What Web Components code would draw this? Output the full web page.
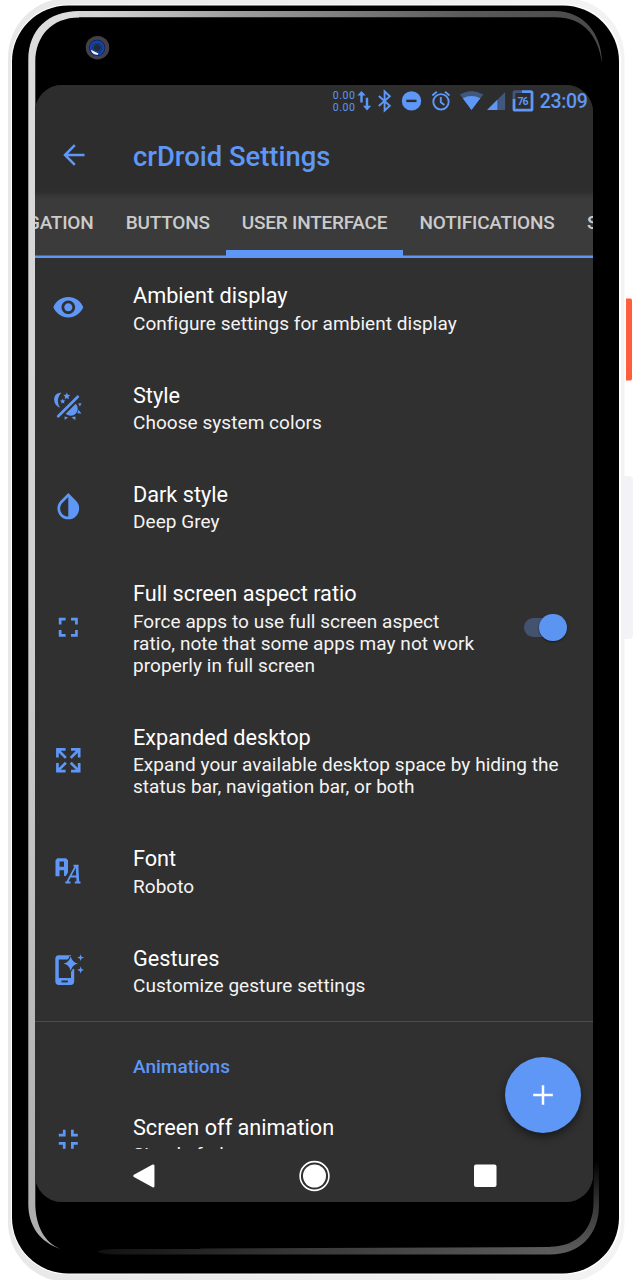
<!DOCTYPE html>
<html lang="en">
<head>
<meta charset="utf-8">
<title>crDroid Settings</title>
<style>
html,body{margin:0;background:#fff;height:1280px;overflow:hidden}
body{font-family:Roboto,"Liberation Sans",sans-serif}
</style>
</head>
<body>
<phone-frame>
  <phone-screen>
    <status-bar></status-bar>
    <app-bar>crDroid Settings</app-bar>
    <tab-strip>
      <tab-item style="--w:74.5px;--j:flex-end">GATION</tab-item>
      <tab-item style="--w:116.500px">BUTTONS</tab-item>
      <tab-item style="--w:177px" selected>USER INTERFACE</tab-item>
      <tab-item style="--w:168px">NOTIFICATIONS</tab-item>
      <tab-item style="--w:22.5px;--j:flex-start">S</tab-item>
    </tab-strip>
    <settings-list>
      <setting-row icon="eye"><span slot="title">Ambient display</span>Configure settings for ambient display</setting-row>
      <setting-row icon="style"><span slot="title">Style</span>Choose system colors</setting-row>
      <setting-row icon="drop"><span slot="title">Dark style</span>Deep Grey</setting-row>
      <setting-row icon="full"><span slot="title">Full screen aspect ratio</span>Force apps to use full screen aspect<br>ratio, note that some apps may not work<br>properly in full screen<toggle-switch slot="end"></toggle-switch></setting-row>
      <setting-row icon="expand"><span slot="title">Expanded desktop</span>Expand your available desktop space by hiding the<br>status bar, navigation bar, or both</setting-row>
      <setting-row icon="font"><span slot="title">Font</span>Roboto</setting-row>
      <setting-row icon="gesture"><span slot="title">Gestures</span>Customize gesture settings</setting-row>
      <list-heading>Animations</list-heading>
      <setting-row icon="exit"><span slot="title">Screen off animation</span>Simple fade</setting-row>
    </settings-list>
    <nav-bar></nav-bar>
    <add-button></add-button>
  </phone-screen>
</phone-frame>
<script>
const define = (name, html) => {
  const t = document.createElement('template');
  t.innerHTML = html;
  customElements.define(name, class extends HTMLElement {
    constructor() {
      super();
      this.attachShadow({mode: 'open'}).append(t.content.cloneNode(true));
    }
  });
};

define('phone-frame', `<style>
:host{display:grid;width:640px;height:1280px;overflow:hidden}
svg,.in{grid-area:1/1}
.in{padding:84.5px 0 0 35px;z-index:1}
svg{display:block}
</style>
<svg width="640" height="1280" viewBox="0 0 640 1280">
<defs>
<linearGradient id="o" x1="0" x2="1" y1="0" y2="0"><stop offset="0" stop-color="#e8e8e8"/><stop offset="1" stop-color="#f3f3f3"/></linearGradient>
<linearGradient id="t" gradientUnits="userSpaceOnUse" x1="28" x2="602" y1="0" y2="0"><stop offset="0" stop-color="#dcdcdc"/><stop offset=".12" stop-color="#d4d4d4"/><stop offset=".35" stop-color="#a0a0a0"/><stop offset=".75" stop-color="#5c5c5c"/><stop offset="1" stop-color="#484848"/></linearGradient>
<linearGradient id="l" x1="0" x2="0" y1="0" y2="1"><stop offset="0" stop-color="#dcdcdc"/><stop offset=".5" stop-color="#cfcfcf"/><stop offset="1" stop-color="#adadad"/></linearGradient>
<linearGradient id="b" gradientUnits="userSpaceOnUse" x1="97" x2="560" y1="0" y2="0"><stop offset="0" stop-color="#111"/><stop offset=".4" stop-color="#343434"/><stop offset="1" stop-color="#5e5e5e"/></linearGradient>
<linearGradient id="r" gradientUnits="userSpaceOnUse" x1="0" x2="0" y1="1160" y2="1254"><stop offset="0" stop-color="#000"/><stop offset=".5" stop-color="#383838"/><stop offset="1" stop-color="#5e5e5e"/></linearGradient>
</defs>
<path d="M624 476h4q5 0 5 4v155q0 4-5 4h-4z" fill="#f3f2f6"/>
<path d="M626 298.500h4.500q1.500 0 1.500 2v78q0 2-1.500 2H626z" fill="#ff5e3c"/>
<rect x="8" y="-2" width="616.500" height="1284" rx="60" fill="url(#o)"/>
<rect x="11" y="4.500" width="610" height="1270" rx="57" fill="#fff"/>
<rect x="12" y="5.500" width="607" height="1268" rx="56" fill="#000"/>
<path d="M28.300 60C28.300 30 48 11 79 11V17.500C52 17.500 35.300 36 35.300 62V1205C36 1226 44 1242 60.500 1249C40 1242 28.300 1226 28.300 1204Z" fill="url(#l)"/>
<path d="M78 11H555C583 11 602 33 602 63C598 34 582 17.300 555 17.300H78Z" fill="url(#t)"/>
<path d="M97 1251.500Q102 1249 115 1249H200L201 1248.500 550 1247V1254.500H115Q102 1254.500 97 1251.500Z" fill="url(#b)"/>
<path d="M594 1160H599V1205C599 1235 580 1254.500 550 1254.500V1246.700C578 1246.700 593.500 1228 593.500 1203Z" fill="url(#r)"/>
<circle cx="97.500" cy="47.700" r="11.800" fill="#443f49"/><circle cx="97.200" cy="47.800" r="8" fill="#10131d"/><circle cx="97.200" cy="47.800" r="6.200" fill="#16264f" stroke="#0c43b5" stroke-width="2.700"/><circle cx="97.200" cy="47.600" r="4" fill="#1c2947" stroke="#34405f"/><path d="M91.500 50L98.500 53.500 97.500 55Q92.500 54.500 91 50.500Z" fill="#e9f2ff"/>
</svg><div class="in"><slot></slot></div>`);

define('phone-screen', `<style>
:host{position:relative;display:flex;flex-direction:column;width:558.400px;height:1117.500px;border-radius:27px;overflow:hidden;background:#303030;color:#fff}
</style><slot></slot>`);

define('status-bar', `<style>
:host{display:flex;flex:none;height:32.500px;background:#2d2d2d;color:#5e97f6}
svg{display:block}text{font-family:Roboto,sans-serif;fill:#5e97f6}
</style>
<svg width="558" height="32.500" viewBox="35.200 85 558 32.500" fill="#5e97f6">
<text x="333" y="99" font-size="10.500" textLength="22">0.00</text><text x="333" y="111" font-size="10.500" textLength="22">0.00</text>
<path d="M361.700 91l4.200 4.600h-3v7h-2.400v-7h-3zM367.200 110.500l-4-4.700h2.800v-8h2.400v8h3z"/>
<path d="M379 96L390 105.800 384.800 110.500V91.500L390 96.200 379 106" fill="none" stroke="#5e97f6" stroke-width="1.900"/>
<circle cx="411.700" cy="100.900" r="9.700"/><rect x="406.500" y="99.700" width="10.200" height="2.400" fill="#2d2d2d"/>
<g fill="none" stroke="#5e97f6" stroke-width="1.900"><circle cx="441.200" cy="101.800" r="7.700"/><path d="M441 97v5.300l3.600 2.600M432.500 95.500l4.500-3.800M449.700 95.500l-4.500-3.800"/></g>
<path d="M460 94.500Q471.700 87.500 483.500 94.500L471.700 110Z" opacity=".4"/><path d="M463 98.300Q471.700 93.500 480.500 98.300L471.700 110Z"/>
<path d="M505.300 92V110H487.300Z" opacity=".4"/><path d="M497.500 99.700V110H487.300Z"/>
<g fill="none" stroke="#5e97f6" stroke-width="2.800"><path opacity=".4" d="M514.200 100V92.900q0-1.300 1.300-1.300H522"/><path d="M522 91.600h8.900q1.300 0 1.300 1.300v16q0 1.300-1.300 1.300h-15.400q-1.300 0-1.300-1.300V99"/></g>
<text x="517.800" y="104.800" font-size="10.500" font-weight="700" textLength="11">76</text>
<text x="540" y="108.300" font-size="19.500" font-weight="500" textLength="48">23:09</text>
</svg>`);

define('app-bar', `<style>
:host{display:flex;flex:none;align-items:center;height:76.500px;background:linear-gradient(#2d2d2d 94%,#303030);color:#5e97f6;font-size:27.400px;font-weight:500;line-height:32px;box-sizing:border-box;padding:0 0 0 26.500px}
svg{flex:none;margin-right:47.500px}
span{white-space:nowrap;padding-top:3px}
</style><svg width="24" height="24" viewBox="61.500 143 24 24" fill="none" stroke="#5e97f6" stroke-width="2.500"><path d="M84 155H64.500M74.300 145.200L64.500 155l9.800 9.800"/></svg><span><slot></slot></span>`);

define('tab-strip', `<style>
:host{display:flex;flex:none;height:64.500px;overflow:hidden;background:linear-gradient(#343434,#3b3b3b 5px);box-shadow:inset 0 -2.500px #5e97f6}
</style><slot></slot>`);
define('tab-item', `<style>
:host{display:flex;flex:none;box-sizing:border-box;width:var(--w);justify-content:var(--j,center);padding:17px 16px 0;font-size:19px;letter-spacing:-.22px;font-weight:500;line-height:23px;white-space:nowrap;color:#cbcbcb}
:host([selected]){border-bottom:8px solid #5e97f6}
</style><slot></slot>`);

define('settings-list', `<style>
:host{display:block;flex:none;height:891px;overflow:hidden}
</style><slot></slot>`);
define('list-heading', `<style>
:host{display:block;box-sizing:border-box;height:70px;padding-top:1px}
div{border-top:1.500px solid #4b4b4b;padding:34px 0 0 98px;color:#5e97f6;font-size:19px;font-weight:500;line-height:22px}
</style><div><slot></slot></div>`);

const ICONS = {
eye:'<path d="M12 4.5C7 4.5 2.73 7.61 1 12c1.73 4.39 6 7.5 11 7.5s9.27-3.11 11-7.5c-1.73-4.39-6-7.5-11-7.5zM12 17c-2.76 0-5-2.24-5-5s2.24-5 5-5 5 2.24 5 5-2.24 5-5 5zm0-8c-1.66 0-3 1.34-3 3s1.34 3 3 3 3-1.34 3-3-1.34-3-3-3z"/>',
drop:'<path d="M17.66 7.93L12 2.27 6.34 7.93c-3.12 3.12-3.12 8.19 0 11.31C7.9 20.8 9.95 21.58 12 21.58c2.05 0 4.1-.78 5.66-2.34 3.12-3.12 3.12-8.19 0-11.31zM12 19.59c-1.6 0-3.11-.62-4.24-1.76C6.62 16.69 6 15.19 6 13.59s.62-3.11 1.76-4.24L12 5.1v14.49z"/>',
full:'<path d="M7 14H5v5h5v-2H7v-3zm-2-4h2V7h3V5H5v5zm12 7h-3v2h5v-5h-2v3zM14 5v2h3v3h2V5h-5z"/>',
exit:'<path d="M5 16h3v3h2v-5H5v2zm3-8H5v2h5V5H8v3zm6 11h2v-3h3v-2h-5v5zm2-11V5h-2v5h5V8h-3z"/>',
expand:'<path d="M9.5 13.09L10.91 14.5 6.41 19H10V21H3V14H5V17.59L9.5 13.09M10.91 9.5L9.5 10.91 5 6.41V10H3V3H10V5H6.41L10.91 9.5M14.5 13.09L19 17.59V14H21V21H14V19H17.59L13.09 14.5 14.5 13.09M13.09 9.5L17.59 5H14V3H21V10H19V6.41L14.500 10.91 13.09 9.500Z"/>',
style:'<g transform="scale(.75)"><path d="M6.200 25.300L25.800 5.700" stroke="#5e97f6" stroke-width="2.700" stroke-linecap="round"/><path d="M9.500 1.800C4 1.300 1.800 6 2.200 9.300 2.500 13 4.800 15.800 8.200 16.600 4.600 12 5.400 5.500 9.500 1.800Z"/><path d="M14.800 1.500l1 2.300 2.500.2-1.900 1.700.6 2.500-2.200-1.300-2.200 1.300.6-2.500-1.900-1.700 2.500-.2zM10.700 7.700l.8 1.600 1.800.2-1.300 1.300.3 1.800-1.600-.9-1.600.9.300-1.800-1.300-1.300 1.800-.2z"/><path d="M23.700 12.700A6.800 6.800 0 0 1 13.700 22.700Z"/><path d="M26 12.500l3.600-.2-1.700 3.200zM26.300 18.800l3.200 3.700-4.200-.2zM12.500 25.600l3.600.6-3.300 2.800zM19.500 26.200l4-.6-.2 3.600z"/></g>',
font:'<g transform="scale(.75)"><path fill-rule="evenodd" d="M5.300 3.300H14L16 5.300V17.500L13.800 21H12V15.200H7.500V21.300H3.500V5.300ZM7.500 6.600V11.800H12V6.600Z"/><g fill="none" stroke="#5e97f6"><path d="M15 27.300L23.800 10.800M18.500 21.500h7M13.300 27.500h5.200M22.800 27.500h5.700M21.500 10.700h5" stroke-width="1.800"/><path d="M25 10.500L25.900 27" stroke-width="2.700"/></g></g>',
gesture:'<g transform="scale(.75)"><path d="M6.800 1.200H19V5.500H6.800V24H19V15H22.200V27.300Q22.200 31 18.500 31H7Q3.300 31 3.300 27.300V5Q3.300 1.200 6.800 1.200Z"/><rect x="9.500" y="26.500" width="6.400" height="1.900" fill="#303030"/><path d="M18.700 2.200Q20 8.200 26 9.600 20 11 18.700 17 17.400 11 11.500 9.600 17.400 8.200 18.700 2.200Z" stroke="#303030" stroke-width="2.400" paint-order="stroke"/><path d="M28.600.2l.9 2.500 2.500.9-2.500.9-.9 2.500-.9-2.500-2.500-.9 2.500-.9zM28.600 12.600l.9 2.500 2.500.9-2.500.9-.9 2.500-.9-2.500-2.500-.9 2.500-.9z"/></g>'
};
customElements.define('setting-row', class extends HTMLElement {
  constructor() {
    super();
    this.attachShadow({mode: 'open'});
  }
  connectedCallback() {
    const icon = this.getAttribute('icon');
    const size = ['style', 'font', 'gesture'].includes(icon) ? 32 : 32.6;
    this.shadowRoot.innerHTML = `<style>
:host{display:flex;align-items:center;box-sizing:border-box;padding:22.400px 26px 22.400px 16.600px}
svg{flex:none;margin-right:${98 - 16.6 - size}px;overflow:visible}
.text{flex:1;white-space:nowrap;padding-top:2px}
.title{font-size:21.700px;line-height:27px;color:#fff}
.sub{font-size:19px;letter-spacing:.055px;line-height:22.200px;padding-top:3.300px;color:#f4f4f4}
</style><svg width="${size}" height="${size}" viewBox="0 0 24 24" fill="#5e97f6">${ICONS[icon]}</svg><div class="text"><div class="title"><slot name="title"></slot></div><div class="sub"><slot></slot></div></div><slot name="end"></slot>`;
  }
});

define('toggle-switch', `<style>
:host{display:flex;align-items:center;flex:none;width:43.500px;height:19.500px}
.track{width:41px;height:19.500px;border-radius:10px;background:#42526f;display:flex;align-items:center}
.knob{flex:none;width:27.500px;height:27.500px;border-radius:50%;margin-left:15.500px;background:#5c94f1;box-shadow:0 1px 2px #0007}
</style><div class="track"><div class="knob"></div></div>`);

define('nav-bar', `<style>
:host{display:block;flex:1;background:#303030}svg{display:block}
</style><svg width="558" height="53" viewBox="35 1149 558 53" fill="#fff"><path d="M134.500 1175.900L153.200 1165.700V1186.200Z" stroke="#fff" stroke-width="2.500" stroke-linejoin="round"/><circle cx="314.500" cy="1176" r="11.500"/><circle cx="314.500" cy="1176" r="14.400" fill="none" stroke="#fff" stroke-width="1.600"/><rect x="474" y="1164.500" width="22.500" height="22.500" rx="2"/></svg>`);

define('add-button', `<style>
:host{position:absolute;right:12px;bottom:69px;width:76.500px;height:76.500px;border-radius:50%;background:#5e97f6;box-shadow:0 4px 8px #0007;display:grid;place-items:center}
</style><svg width="20" height="20" viewBox="0 0 20 20"><path d="M10 .2v19.600M.2 10h19.600" stroke="#fff" stroke-width="2.500"/></svg>`);
</script>
</body>
</html>
